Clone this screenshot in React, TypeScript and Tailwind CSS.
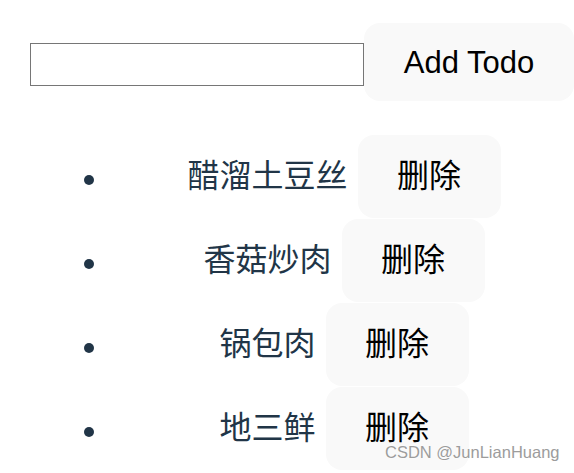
import React, { useState } from 'react';

const cjk = "font-['Segoe_UI','Liberation_Sans','Noto_Sans_CJK_SC',sans-serif]";

export default function App() {
  const [text, setText] = useState('');
  const [todos, setTodos] = useState<string[]>(['醋溜土豆丝', '香菇炒肉', '锅包肉', '地三鲜']);

  const addTodo = () => {
    if (!text.trim()) return;
    setTodos([...todos, text.trim()]);
    setText('');
  };

  return (
    <div className={`relative w-[574px] h-[473px] overflow-hidden bg-white text-[#213547] ${cjk}`}>
      {/* input row */}
      <div className="flex items-center mt-[23px] ml-[30px]">
        <input
          value={text}
          onChange={(e) => setText(e.target.value)}
          className="w-[334px] h-[43px] mt-[5px] border border-[#767676] bg-white px-1 text-[30px] outline-none"
        />
        <button
          onClick={addTodo}
          className="w-[210px] h-[78px] shrink-0 rounded-[16px] border border-transparent bg-[#f9f9f9] text-black text-[31px] leading-none font-['Liberation_Sans',Arial,sans-serif]"
        >
          Add Todo
        </button>
      </div>

      {/* list */}
      <ul className="mt-[33px]">
        {todos.map((t, i) => (
          <li key={i} className="flex items-center h-[84px]">
            <span className="ml-[84px] mt-[8px] w-[10px] h-[10px] rounded-full bg-[#213547] shrink-0" />
            <div className="ml-[50px] w-[400px] flex justify-center items-center gap-[10px] shrink-0">
              <span className="text-[32px] leading-none">{t}</span>
              <button
                onClick={() => setTodos(todos.filter((_, j) => j !== i))}
                className="w-[143px] h-[83px] shrink-0 rounded-[16px] border border-transparent bg-[#f9f9f9] text-black text-[32px] leading-none"
              >
                删除
              </button>
            </div>
          </li>
        ))}
      </ul>

      {/* watermark */}
      <div className="absolute left-[385px] top-[444px] text-[16.5px] leading-none text-[#9c9c9c] font-['Liberation_Sans',Arial,sans-serif] [text-shadow:0_0_2px_#ffffff]">
        CSDN @JunLianHuang
      </div>
    </div>
  );
}
